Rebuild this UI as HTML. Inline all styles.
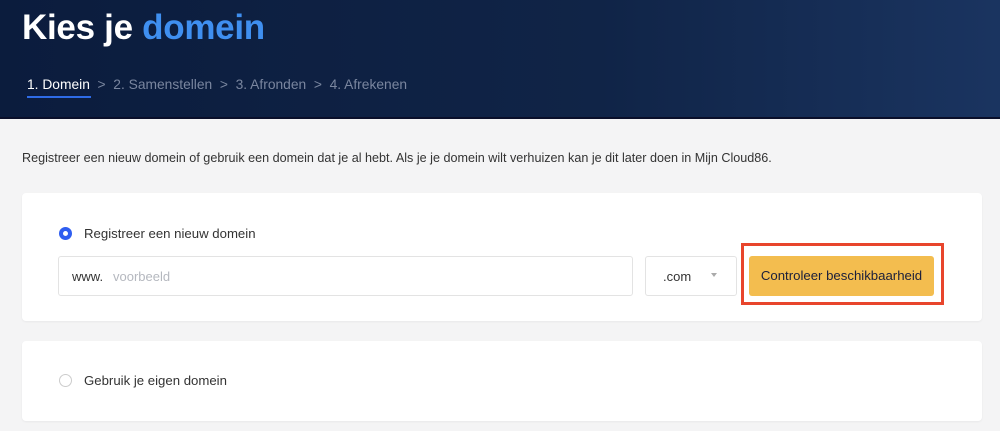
<!DOCTYPE html>
<html><head><meta charset="utf-8"><style>
*{margin:0;padding:0;box-sizing:border-box}
body{width:1000px;height:431px;overflow:hidden;background:#f4f4f5;font-family:"Liberation Sans",sans-serif;position:relative}
.hdr{position:absolute;left:0;top:0;width:1000px;height:119px;background:linear-gradient(90deg,#0b1c3d 0%,#102447 60%,#1a3460 100%);border-bottom:2px solid #0a0f2a}
h1{position:absolute;left:22px;top:8px;font-size:35px;font-weight:bold;color:#fff;letter-spacing:-0.3px}
h1 span{color:#3f8ff0}
.steps{position:absolute;left:27px;top:77px;font-size:13.8px;color:#7a869f;white-space:nowrap}
.steps b{font-weight:normal;color:#fff}
.ul{position:absolute;left:27px;top:96px;width:64px;height:2px;background:#2e6be6}
.intro{position:absolute;left:22px;top:151px;font-size:12.6px;color:#333;white-space:nowrap}
.card{position:absolute;left:22px;width:960px;background:#fff;border-radius:4px;box-shadow:0 1px 2px rgba(0,0,0,.05)}
.radio{position:absolute;width:13px;height:13px;border-radius:50%}
.lbl{position:absolute;font-size:13.2px;color:#333}
.box{position:absolute;top:256px;height:40px;border:1px solid #e3e3e3;border-radius:3px;background:#fff;font-size:13px}
</style></head><body>
<div class="hdr"></div>
<h1>Kies je <span>domein</span></h1>
<div class="steps"><b>1. Domein</b> &nbsp;&gt;&nbsp; 2. Samenstellen &nbsp;&gt;&nbsp; 3. Afronden &nbsp;&gt;&nbsp; 4. Afrekenen</div>
<div class="ul"></div>
<div class="intro">Registreer een nieuw domein of gebruik een domein dat je al hebt. Als je je domein wilt verhuizen kan je dit later doen in Mijn Cloud86.</div>
<div class="card" style="top:193px;height:128px"></div>
<div class="radio" style="left:59px;top:227px;border:4px solid #2f5ef0"></div>
<div class="lbl" style="left:84px;top:226px">Registreer een nieuw domein</div>
<div class="box" style="left:58px;width:575px"><span style="position:absolute;left:13px;top:12px;color:#333">www.</span><span style="position:absolute;left:54px;top:12px;color:#b5b8bf">voorbeeld</span></div>
<div class="box" style="left:645px;width:92px"><span style="position:absolute;left:17px;top:12px;color:#333">.com</span><span style="position:absolute;left:65px;top:16px;border-left:3px solid transparent;border-right:3px solid transparent;border-top:4px solid #aaa"></span></div>
<div style="position:absolute;left:741px;top:243px;width:203px;height:62px;border:3px solid #e8452c"></div>
<div style="position:absolute;left:749px;top:256px;width:185px;height:40px;background:#f3bd4f;border-radius:3px;color:#1b1f3b;font-size:13.2px;text-align:center;line-height:40px">Controleer beschikbaarheid</div>
<div class="card" style="top:341px;height:80px"></div>
<div class="radio" style="left:59px;top:374px;border:1px solid #ccc"></div>
<div class="lbl" style="left:84px;top:373px">Gebruik je eigen domein</div>
</body></html>
